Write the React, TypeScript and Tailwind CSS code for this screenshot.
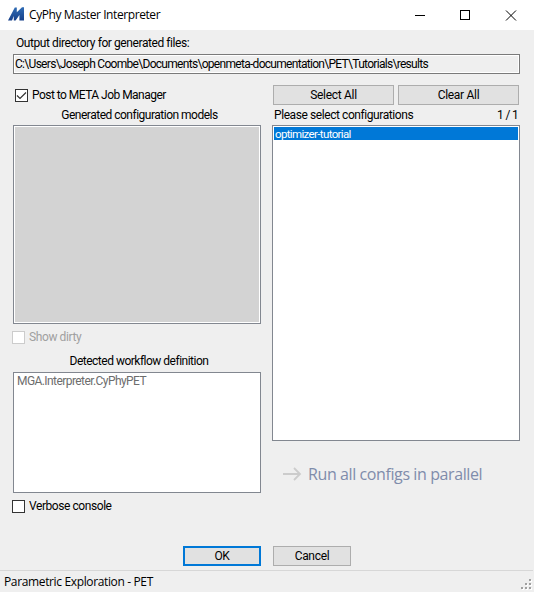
import type { ReactNode } from "react";

const segoe = "font-['Open_Sans','Noto_Sans',sans-serif]";

function Button({ children, className }: { children: ReactNode; className: string }) {
  return (
    <button className={`flex h-5 items-center justify-center bg-[#e1e1e1] leading-none tracking-[-0.3px] ${className}`}>
      {children}
    </button>
  );
}

function CheckBox({ label, checked, disabled, tracking }: { label: string; checked?: boolean; disabled?: boolean; tracking: string }) {
  return (
    <label className={`flex h-[13px] items-center gap-1 whitespace-nowrap leading-[13px] ${disabled ? "text-[#a0a0a0]" : "text-black"}`}>
      <span className={`block size-[13px] shrink-0 border bg-white ${disabled ? "border-[#cccccc]" : "border-[#333333]"}`}>
        {checked && (
          <svg viewBox="0 0 11 11" className="size-[11px]" fill="none" stroke="#333" strokeWidth="1.2">
            <path d="M1 5.5 4 8.5 10 2.5" />
          </svg>
        )}
      </span>
      <span className={tracking}>{label}</span>
    </label>
  );
}

export default function App() {
  return (
    <div className="flex h-[592px] w-[534px] flex-col overflow-hidden bg-[#efefef] font-['Roboto','Liberation_Sans',sans-serif] text-[12px] leading-[14px] text-black">
      <header className="flex h-[30px] shrink-0 items-center bg-white pl-2">
        <svg className="mb-[2px] h-[14px] w-4" viewBox="0 0 16 14">
          <defs>
            <linearGradient id="logo" x1="0" y1="0" x2="0" y2="1">
              <stop offset="0" stopColor="#2f6cb5" />
              <stop offset="1" stopColor="#17408a" />
            </linearGradient>
          </defs>
          <path fill="url(#logo)" d="M0 13.5 6.8 0.5H8.8V5.2L14 0.3H16V13.5H11.4V8L7.6 13.5H5.8V9L4 13.5Z" />
        </svg>
        <h1 className={`ml-[5px] flex-1 whitespace-nowrap text-[12px] ${segoe}`}>
          <span className="tracking-[-0.41px]">CyPhy Master Interpreter</span>
        </h1>
        <svg className="h-[11px] w-[102px] mr-[17px]" viewBox="0 0 102 11" fill="none" stroke="#000" shapeRendering="crispEdges">
          <path d="M0 5.5H10" />
          <rect x="45.5" y="0.5" width="9" height="9" />
          <path d="M91 0.5 101 10.5M101 0.5 91 10.5" shapeRendering="auto" />
        </svg>
      </header>

      <main className="flex h-[540px] shrink-0 flex-col pl-[13px] pr-[14px] pt-[6px]">
        <div className="h-[18px] whitespace-nowrap pl-[3px] leading-[14px] tracking-[-0.42px]">Output directory for generated files:</div>
        <div className="h-5 shrink-0 border border-[#7a7a7a] p-px bg-white">
          <div className="h-4 whitespace-nowrap bg-[#efefef] leading-4 tracking-[-0.7px]">
            C:\Users\Joseph Coombe\Documents\openmeta-documentation\PET\Tutorials\results
          </div>
        </div>

        <div className="flex justify-between pt-[11px]">
          <section className="flex w-[248px] flex-col">
            <div className="h-[19px] pl-0.5 pt-1">
              <CheckBox label="Post to META Job Manager" checked tracking="tracking-[-0.53px]" />
            </div>
            <div className="h-[21px] pl-[5px] pt-1 text-center tracking-[-0.5px]">Generated configuration models</div>
            <div className="h-[199px] border border-[#828790] bg-white p-px">
              <div className="h-full bg-[#d3d3d3]" />
            </div>
            <div className="-ml-px mt-[7px]">
              <CheckBox label="Show dirty" disabled tracking="tracking-[-0.4px]" />
            </div>
            <div className="mt-[10px] h-[18px] pl-[4px] text-center tracking-[-0.5px]">Detected workflow definition</div>
            <div className="h-[121px] border border-[#828790] bg-white pl-[3px] pt-[1px] text-[#6d6d6d]">
              <span className="tracking-[-0.57px]">MGA.Interpreter.CyPhyPET</span>
            </div>
            <div className="-ml-px mt-[7px]">
              <CheckBox label="Verbose console" tracking="tracking-[-0.43px]" />
            </div>
          </section>

          <section className="flex w-[248px] flex-col">
            <div className="flex gap-1 pl-px">
              <Button className="w-[121px] border border-[#adadad]">Select All</Button>
              <Button className="w-[121px] border border-[#adadad]">Clear All</Button>
            </div>
            <div className="flex h-5 justify-between pl-0.5 pr-0.5 pt-[3px]">
              <span className="tracking-[-0.42px]">Please select configurations</span>
              <span className="tracking-[-0.7px]">1 / 1</span>
            </div>
            <div className="h-[316px] border border-[#828790] bg-white p-px">
              <div className="h-[13px] bg-[#0078d7] pl-px leading-[14px] text-white">
                <span className="text-[11.5px] tracking-[-0.64px]">optimizer-tutorial</span>
              </div>
            </div>
            <div className={`mt-[21px] flex h-6 items-center pl-[11px] text-[16px] text-[#7f8cab] ${segoe}`}>
              <svg className="h-[14px] w-[19px]" viewBox="0 0 19 14" fill="none" stroke="#cccccc" strokeWidth="1.8">
                <path d="M0 7H17M11 1 17 7 11 13" />
              </svg>
              <span className="ml-1.5 whitespace-nowrap tracking-[-0.4px]">Run all configs in parallel</span>
            </div>
          </section>
        </div>

        <div className="mt-auto flex gap-3 pb-1 pl-[170px]">
          <Button className="w-[78px] border-2 border-[#0078d7]">OK</Button>
          <Button className="w-[78px] border border-[#adadad]">Cancel</Button>
        </div>
      </main>

      <footer className={`mr-px flex h-[22px] justify-between border-t border-[#d7d7d7] pl-1 text-[12px] ${segoe}`}>
        <span className="whitespace-nowrap pt-1 tracking-[-0.36px]">Parametric Exploration - PET</span>
        <svg className="mr-px mt-2 h-[11px] w-[11px]" viewBox="0 0 11 11" shapeRendering="crispEdges">
          <path fill="#fff" d="M9 1h2v2h-2zM5 5h2v2h-2zM9 5h2v2h-2zM1 9h2v2h-2zM5 9h2v2h-2zM9 9h2v2h-2z" />
          <path fill="#a0a0a0" d="M8 0h2v2h-2zM4 4h2v2h-2zM8 4h2v2h-2zM0 8h2v2h-2zM4 8h2v2h-2zM8 8h2v2h-2z" />
        </svg>
      </footer>
    </div>
  );
}
